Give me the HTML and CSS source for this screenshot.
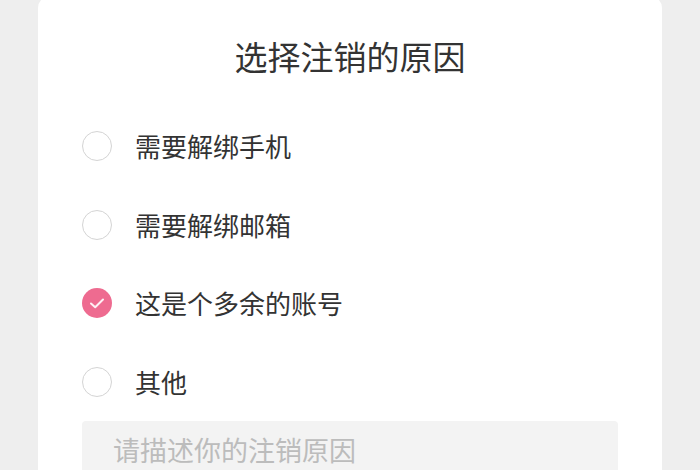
FILE: index.html
```html
<!DOCTYPE html>
<html lang="zh-CN">
<head>
<meta charset="utf-8">
<title>选择注销的原因</title>
<link rel="stylesheet" href="styles.css">
</head>
<body>
<div class="page">
  <div class="card">
    <h1 class="title">选择注销的原因</h1>
    <ul class="options">
      <li class="option"><span class="radio"></span><span class="label">需要解绑手机</span></li>
      <li class="option"><span class="radio"></span><span class="label">需要解绑邮箱</span></li>
      <li class="option"><span class="radio checked"><svg viewBox="0 0 30 30" width="30" height="30"><circle cx="15" cy="15" r="15" fill="#ee6b90"/><path d="M9 15.5 L13.2 19.3 L21 11.5" fill="none" stroke="#fff" stroke-width="2" stroke-linecap="round" stroke-linejoin="round" opacity="0.9"/></svg></span><span class="label">这是个多余的账号</span></li>
      <li class="option"><span class="radio"></span><span class="label">其他</span></li>
    </ul>
    <div class="textarea">请描述你的注销原因</div>
  </div>
</div>
</body>
</html>
```

FILE: styles.css
```css
html, body {
  margin: 0;
  padding: 0;
  background: #eeeeee;
  font-family: "Noto Sans CJK SC", "Noto Sans", sans-serif;
}
.page {
  padding: 0 38px;
  height: 470px;
  overflow: hidden;
}
.card {
  background: #ffffff;
  margin-top: -4px;
  border-radius: 12px;
  padding: 40px 44px 0;
  height: 520px;
  box-sizing: border-box;
  overflow: hidden;
}
.title {
  margin: 0;
  font-size: 33px;
  line-height: 40px;
  font-weight: 400;
  color: #333333;
  text-align: center;
}
.options {
  list-style: none;
  margin: 31px 0 0;
  padding: 0;
}
.option {
  display: flex;
  align-items: center;
  height: 78.5px;
}
.radio {
  width: 30px;
  height: 30px;
  box-sizing: border-box;
  border: 1.5px solid #d4d4d4;
  border-radius: 50%;
  flex: none;
}
.radio.checked {
  border: none;
}
.radio svg {
  display: block;
}
.label {
  margin-left: 23px;
  font-size: 26px;
  line-height: 30px;
  color: #333333;
}
.textarea {
  background: #f3f3f3;
  border-radius: 4px;
  height: 120px;
  padding: 14px 31px;
  font-size: 27px;
  line-height: 30px;
  color: #bcbcbc;
}
```
